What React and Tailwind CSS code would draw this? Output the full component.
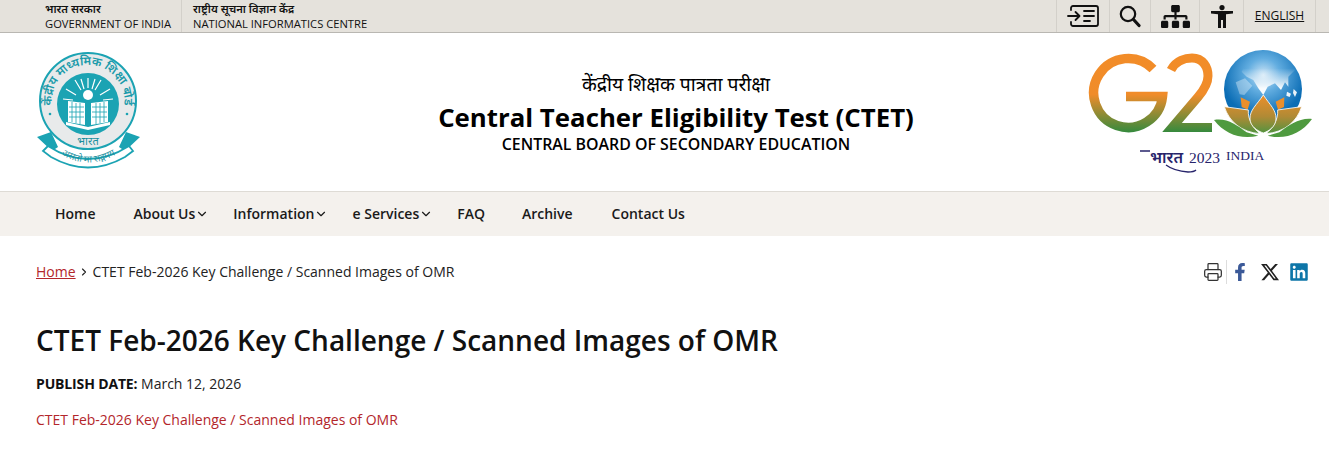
import { ChevronDown, ChevronRight, Printer } from 'lucide-react'
import { FaSitemap, FaFacebookF, FaLinkedin } from 'react-icons/fa'
import { FaXTwitter } from 'react-icons/fa6'

const HINDI = '"Noto Sans", "DejaVu Sans", sans-serif'

const NAV = [
  { label: 'Home', ml: 'ml-[55px]' },
  { label: 'About Us', ml: 'ml-[38px]', menu: true },
  { label: 'Information', ml: 'ml-[24px]', menu: true },
  { label: 'e Services', ml: 'ml-[24px]', menu: true },
  { label: 'FAQ', ml: 'ml-[24px]' },
  { label: 'Archive', ml: 'ml-[37px]' },
  { label: 'Contact Us', ml: 'ml-[39px]' },
]

function MenuIcon() {
  return (
    <svg width="32" height="22" viewBox="0 0 32 22" fill="none" stroke="#111" strokeWidth="1.8" strokeLinecap="round" strokeLinejoin="round">
      <path d="M4 5V3a2 2 0 0 1 2-2h23a2 2 0 0 1 2 2v16a2 2 0 0 1-2 2H6a2 2 0 0 1-2-2v-2" />
      <path d="M1 11h11M8.500 7l4 4-4 4" />
      <path d="M17 6h10M17 11h10M17 16h6" />
    </svg>
  )
}

function SearchIcon() {
  return (
    <svg width="22" height="23" viewBox="0 0 22 23" fill="none" stroke="#111" strokeLinecap="round">
      <circle cx="9" cy="9" r="7.200" strokeWidth="2.200" />
      <path d="M14.500 14.500L20 20.500" strokeWidth="3.200" />
    </svg>
  )
}

function AccessIcon() {
  return (
    <svg width="22" height="23" viewBox="0 0 22 23" fill="#111">
      <circle cx="11" cy="2.600" r="2.600" />
      <path d="M0 6h22v2.400l-7 .8V23h-3v-8h-2v8H7V9.200l-7-.8z" />
    </svg>
  )
}

function CbseLogo() {
  return (
    <svg width="105" height="122" viewBox="36 50 105 122" className="shrink-0">
      <defs>
        <path id="sealArc" d="M52.500 110A36.500 36.500 0 1 1 123.500 110" />
        <path id="ribbonArc" d="M57 152Q88 173 120 152" />
      </defs>
      <path d="M37 137l14-5 7 15-6 4z M140 137l-14-5-7 15 6 4z" fill="#1ba3b3" />
      <circle cx="88" cy="101" r="48" fill="#e8eaeb" stroke="#1ba3b3" strokeWidth="2" />
      <text fontSize="12" fill="#1a9aaa" fontWeight="600" style={{ fontFamily: HINDI }}>
        <textPath href="#sealArc" startOffset="50%" textAnchor="middle">केंद्रीय माध्यमिक शिक्षा बोर्ड</textPath>
      </text>
      <circle cx="50" cy="114" r="1.300" fill="#1ba3b3" />
      <circle cx="127" cy="114" r="1.300" fill="#1ba3b3" />
      <circle cx="88" cy="104" r="31" fill="#1ba3b3" />
      <g stroke="#fff" strokeWidth="1.200">
        <path d="M88 88L88 78M81 90L75 80M95 90L101 80M76 95L66 89M100 95L110 89M73 100L63 99M103 100L113 99M84 89L81 79M92 89L95 79" />
      </g>
      <circle cx="88" cy="95" r="5" fill="#fff" />
      <path d="M68 101l17 2v22l-17-3z M108 101l-17 2v22l17-3z" fill="#fff" />
      <g stroke="#1ba3b3" strokeWidth="0.800">
        <path d="M72 102v20M76 103v20M80 103v21M96 103v21M100 103v20M104 102v20M69 107h15M69 112h15M69 117h15M92 107h15M92 112h15M92 117h15" />
      </g>
      <path d="M66 122l22 5 22-5v3l-22 5-22-5z" fill="#fff" />
      <text x="88" y="145" fontSize="11" fill="#1a8f9e" textAnchor="middle" style={{ fontFamily: HINDI }}>भारत</text>
      <path d="M48 146Q88 172 129 146l4 5q-4 3-8 6-37 21-74 0-4-3-8-6z" fill="#fff" stroke="#1ba3b3" strokeWidth="1.800" />
      <text fontSize="9.500" fill="#1a8f9e" style={{ fontFamily: HINDI }}>
        <textPath href="#ribbonArc" startOffset="50%" textAnchor="middle">असतो मा सद्गमय</textPath>
      </text>
    </svg>
  )
}

function G20Logo() {
  return (
    <svg width="230" height="125" viewBox="1087 50 230 125" className="shrink-0">
      <defs>
        <linearGradient id="tri" gradientUnits="userSpaceOnUse" x1="0" y1="55" x2="0" y2="134">
          <stop offset="0" stopColor="#f28c28" />
          <stop offset="0.5" stopColor="#f08c2a" />
          <stop offset="1" stopColor="#2c8a3e" />
        </linearGradient>
        <linearGradient id="petal" gradientUnits="userSpaceOnUse" x1="0" y1="150" x2="0" y2="268">
          <stop offset="0" stopColor="#ec8f2b" />
          <stop offset="0.55" stopColor="#b08a35" />
          <stop offset="1" stopColor="#4c9440" />
        </linearGradient>
        <radialGradient id="ocean" gradientUnits="userSpaceOnUse" cx="175" cy="90" r="125">
          <stop offset="0" stopColor="#cfe6f6" />
          <stop offset="0.4" stopColor="#62ade0" />
          <stop offset="1" stopColor="#0b6db5" />
        </radialGradient>
        <linearGradient id="land" gradientUnits="userSpaceOnUse" x1="0" y1="70" x2="0" y2="130">
          <stop offset="0" stopColor="#fff" stopOpacity="0" />
          <stop offset="1" stopColor="#fff" stopOpacity="0.95" />
        </linearGradient>
      </defs>
      <path d="M1153 69A34.500 34.500 0 1 0 1162.500 96.500H1126" fill="none" stroke="url(#tri)" strokeWidth="9.500" />
      <path d="M1171 70C1176 60 1186 58 1192 58C1203 58 1208 67 1208 76C1208 84 1204 90 1198 97L1172 127.500H1212" fill="none" stroke="url(#tri)" strokeWidth="9" />
      {/* globe and lotus are traced in the 3x crop's coordinates */}
      <g transform="translate(1205 45) scale(0.3333)">
        <circle cx="174" cy="132" r="117" fill="url(#ocean)" />
        <path d="M110 80L125 95L145 105L160 130L175 150L188 125L210 115L228 135L240 112L250 125L250 95L270 75L262 60L180 50L120 60z" fill="url(#land)" />
        <path d="M92 112L120 100L142 122L118 150L104 148z" fill="#fff" opacity="0.35" />
        <path d="M246 140l12 6-4 10-10-4z M266 132l10 10-6 14-6-12z" fill="#fff" opacity="0.9" />
        <path d="M107 157L135 170L128 194L110 186z M238 157L212 170L219 194L237 186z" fill="#ea8f2c" />
        <path d="M58 185L130 195C128 225 145 250 165 266C110 262 72 230 58 185z" fill="url(#petal)" stroke="#fff" strokeWidth="2.500" />
        <path d="M290 185L218 195C220 225 203 250 183 266C238 262 276 230 290 185z" fill="url(#petal)" stroke="#fff" strokeWidth="2.500" />
        <path d="M175 150C195 180 214 195 213 222C212 245 192 258 175 264C158 258 136 245 135 222C134 195 155 180 175 150z" fill="url(#petal)" stroke="#fff" strokeWidth="2.500" />
        <path d="M27 225C65 218 95 240 125 262L160 272C110 285 60 268 27 225z" fill="#4f9a3f" />
        <path d="M321 222C283 218 253 240 223 262L188 272C238 285 288 268 321 222z" fill="#4f9a3f" />
      </g>
      <text x="1150" y="163" fontSize="16" fill="#27246b" fontWeight="600" style={{ fontFamily: HINDI }}>भारत</text>
      <path d="M1140 151h10M1166 165q8 6 22 7q6 0 8-2" fill="none" stroke="#27246b" strokeWidth="1.300" />
      <text x="1189" y="163" fontSize="15.500" fill="#27246b" style={{ fontFamily: '"Liberation Serif", serif' }}>2023</text>
      <text x="1226" y="160" fontSize="13.500" fill="#27246b" style={{ fontFamily: '"Liberation Serif", serif' }}>INDIA</text>
    </svg>
  )
}

function TopBar() {
  return (
    <div className="flex h-[33px] items-stretch justify-between overflow-hidden border-b border-[#b9b7b2] bg-[#e5e2dc] text-[#111]">
      <div className="ml-[45px] flex text-[11.2px] leading-[15px]">
        <div className="w-[137px] border-r border-[#d3d0ca] pt-px">
          <div style={{ fontFamily: HINDI }} className="font-semibold">भारत सरकार</div>
          <div>GOVERNMENT OF INDIA</div>
        </div>
        <div className="pl-[11px] pt-px">
          <div style={{ fontFamily: HINDI }} className="font-semibold">राष्ट्रीय सूचना विज्ञान केंद्र</div>
          <div>NATIONAL INFORMATICS CENTRE</div>
        </div>
      </div>
      <div className="mr-[13px] flex border-r border-[#d3d0ca]">
        <div className="flex w-[53px] items-center justify-center border-l border-[#d3d0ca]"><MenuIcon /></div>
        <div className="flex w-[41px] items-center justify-center border-l border-[#d3d0ca]"><SearchIcon /></div>
        <div className="flex w-[49px] items-center justify-center border-l border-[#d3d0ca]"><FaSitemap size={29} color="#111" /></div>
        <div className="flex w-[44px] items-center justify-center border-l border-[#d3d0ca]"><AccessIcon /></div>
        <div className="flex w-[72px] items-center justify-center border-l border-[#d3d0ca] text-xs underline">ENGLISH</div>
      </div>
    </div>
  )
}

function Header() {
  return (
    <div className="flex h-[158px] items-start bg-white pl-9 pr-[12px] pt-[17px]">
      <CbseLogo />
      <div className="flex-1 pl-[124px] pt-[19px] text-center text-black">
        <div style={{ fontFamily: HINDI }} className="text-[19.300px] leading-[30px]">केंद्रीय शिक्षक पात्रता परीक्षा</div>
        <div className="text-[25.800px] font-bold leading-[36px]">Central Teacher Eligibility Test (CTET)</div>
        <div className="text-[15.900px] font-semibold leading-[18px]">CENTRAL BOARD OF SECONDARY EDUCATION</div>
      </div>
      <G20Logo />
    </div>
  )
}

function Nav() {
  return (
    <div className="flex h-[45px] items-center border-t border-[#dedbd5] bg-[#f4f1ed] text-sm font-semibold text-[#1a1a1a]">
      {NAV.map((item) => (
        <div key={item.label} className={`flex items-center ${item.ml}`}>
          {item.label}
          {item.menu && <ChevronDown size={14} strokeWidth={2} />}
        </div>
      ))}
    </div>
  )
}

function Crumbs() {
  return (
    <div className="flex h-[72px] items-center justify-between pl-9 pr-[20px] text-sm text-[#222]">
      <div className="flex items-center">
        <a className="text-[#b3262b] underline">Home</a>
        <ChevronRight size={12} strokeWidth={2.200} className="mx-[2px]" />
        <span className="ml-px">CTET Feb-2026 Key Challenge / Scanned Images of OMR</span>
      </div>
      <div className="flex items-center">
        <Printer size={20} strokeWidth={1.500} color="#333" />
        <div className="ml-[3px] h-[24px] w-px bg-[#ddd]" />
        <FaFacebookF size={18} color="#3b5998" className="ml-[4px]" />
        <FaXTwitter size={20} color="#222" className="ml-[11px]" />
        <FaLinkedin size={20} color="#0e76a8" className="ml-[9px]" />
      </div>
    </div>
  )
}

export default function App() {
  return (
    <div className="min-h-[467px] bg-white" style={{ fontFamily: '"Open Sans", sans-serif' }}>
      <TopBar />
      <Header />
      <Nav />
      <Crumbs />
      <div className="px-9 pt-[13px]">
        <h1 className="text-[28px] font-semibold leading-[38px] text-[#111]">CTET Feb-2026 Key Challenge / Scanned Images of OMR</h1>
        <p className="mt-[15px] text-sm leading-[20px] text-[#222]"><b className="font-bold tracking-[-0.15px] text-[#111]">PUBLISH DATE:</b> March 12, 2026</p>
        <a className="mt-[16px] block text-sm leading-[20px] text-[#b3262b]">CTET Feb-2026 Key Challenge / Scanned Images of OMR</a>
      </div>
    </div>
  )
}
